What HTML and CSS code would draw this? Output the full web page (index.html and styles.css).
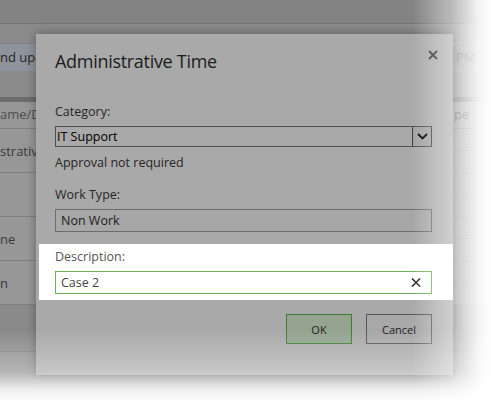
FILE: index.html
```html
<!DOCTYPE html>
<html>
<head>
<meta charset="utf-8">
<link rel="stylesheet" href="styles.css">
</head>
<body>
<div class="app">
  <div class="topbar"></div>
  <div class="toolbar">
    <div class="tb-btn">nd upd</div>
    <div class="tb-time">PM</div>
  </div>
  <div class="band"></div>
  <div class="grid">
    <div class="cell head left">ame/D</div>
    <div class="cell head mid"></div>
    <div class="cell head right">pe</div>

    <div class="cell left tall">strative</div>
    <div class="cell mid tall"></div>
    <div class="cell right split"><div class="sub"></div><div class="sub"></div></div>

    <div class="cell left tall"></div>
    <div class="cell mid tall"></div>
    <div class="cell right split"><div class="sub"></div><div class="sub"></div></div>

    <div class="cell left tall">ne</div>
    <div class="cell mid tall"></div>
    <div class="cell right split"><div class="sub"></div><div class="sub"></div></div>

    <div class="cell left tall">n</div>
    <div class="cell mid tall"></div>
    <div class="cell right split"><div class="sub"></div><div class="sub"></div></div>
  </div>
  <div class="footer"></div>
</div>

<div class="dialog">
  <h1 class="title">Administrative Time</h1>
  <button class="close" aria-label="Close">
    <svg width="10" height="10" viewBox="0 0 10 10"><path d="M1 1L9 9M9 1L1 9" stroke="#2e2e2e" stroke-width="1.8" fill="none"/></svg>
  </button>

  <div class="label first">Category:</div>
  <div class="select">
    <span class="select-text">IT Support</span>
    <span class="select-btn">
      <svg width="11" height="7" viewBox="0 0 11 7"><path d="M1 1L5.5 5.5L10 1" stroke="#000" stroke-width="1.8" fill="none"/></svg>
    </span>
  </div>
  <div class="note">Approval not required</div>

  <div class="label">Work Type:</div>
  <div class="input readonly">Non Work</div>

  <div class="highlight">
    <div class="label hl">Description:</div>
    <div class="input desc">
      <span>Case 2</span>
      <svg width="10" height="9" viewBox="0 0 10 9"><path d="M1 0.5L9 8.5M9 0.5L1 8.5" stroke="#333" stroke-width="1.7" fill="none"/></svg>
    </div>
  </div>

  <div class="actions">
    <button class="btn ok">OK</button>
    <button class="btn cancel">Cancel</button>
  </div>
</div>

<div class="fade"></div>
</body>
</html>
```
FILE: styles.css
```css
html, body {
  margin: 0;
  padding: 0;
}
body {
  width: 491px;
  height: 402px;
  overflow: hidden;
  position: relative;
  background: #8e8e8e;
  font-family: "Open Sans", "Noto Sans", sans-serif;
  font-size: 12.5px;
}
.app {
  display: flex;
  flex-direction: column;
  width: 491px;
}
.topbar {
  height: 23px;
  background: #838383;
  border-bottom: 1px solid #747474;
}
.toolbar {
  height: 73px;
  background: #8b8b8b;
  display: flex;
  justify-content: space-between;
  align-items: flex-start;
  padding-top: 19px;
  box-sizing: border-box;
}
.tb-btn {
  width: 40px;
  height: 28px;
  box-sizing: border-box;
  background: #8f949c;
  border-top: 1px solid #7d8189;
  color: #262626;
  line-height: 27px;
  white-space: nowrap;
  font-size: 13px;
}
.tb-time {
  width: 38px;
  height: 28px;
  box-sizing: border-box;
  border-top: 1px solid #9a9a9a;
  border-bottom: 1px solid #9a9a9a;
  color: #555;
  line-height: 27px;
  padding-left: 3px;
  font-size: 13px;
}
.band {
  height: 5px;
  background: #6c6c6c;
}
.grid {
  display: grid;
  grid-template-columns: 40px 1fr 38px;
  background: #979797;
}
.cell {
  box-sizing: border-box;
  border-bottom: 1px solid #7f7f7f;
  color: #3a3a3a;
  white-space: nowrap;
  font-size: 13px;
}
.head {
  height: 27px;
  line-height: 24px;
  color: #4c4c4c;
}
.tall {
  height: 44px;
  line-height: 44px;
}
.right.head {
  padding-left: 1px;
}
.split {
  border-bottom: none;
  display: flex;
  flex-direction: column;
}
.sub {
  height: 22px;
  box-sizing: border-box;
  border-bottom: 1px solid #8a8a8a;
}
.footer {
  height: 46px;
  background: #8a8a8a;
  border-bottom: 1px solid #7a7a7a;
}

.dialog {
  position: absolute;
  left: 36px;
  top: 34px;
  width: 417px;
  box-sizing: border-box;
  background: #a9a9a9;
  padding: 15px 21px 31px 19px;
  box-shadow: 0 0 10px rgba(0, 0, 0, 0.35);
}
.title {
  margin: 0;
  font-weight: normal;
  font-size: 18px;
  line-height: 24px;
  color: #1c1c1c;
  letter-spacing: -0.3px;
}
.close {
  position: absolute;
  top: 16px;
  right: 15px;
  width: 10px;
  height: 10px;
  padding: 0;
  border: none;
  background: none;
  display: flex;
}
.label {
  line-height: 18px;
  color: #262626;
  margin-top: 14px;
}
.label.first {
  margin-top: 30px;
}
.select {
  margin-top: 5px;
  height: 21px;
  box-sizing: border-box;
  border: 1px solid #505050;
  display: flex;
  justify-content: space-between;
  align-items: stretch;
}
.select-text {
  color: #000;
  line-height: 19px;
  padding-left: 1px;
}
.select-btn {
  width: 20px;
  box-sizing: border-box;
  border-left: 1px solid #3e3e3e;
  border-right: 1px solid #3e3e3e;
  background: #a2a2a2;
  display: flex;
  align-items: center;
  justify-content: center;
  margin-right: -1px;
}
.note {
  margin-top: 7px;
  line-height: 18px;
  color: #262626;
}
.input {
  margin-top: 5px;
  height: 23px;
  box-sizing: border-box;
  line-height: 21px;
  padding-left: 5px;
}
.readonly {
  border: 1px solid #6c6c6c;
  background: #a7a7a7;
  color: #1c1c1c;
}
.highlight {
  margin: 12px -21px 0 -16px;
  padding: 4px 21px 6px 16px;
  background: #fff;
}
.label.hl {
  margin-top: 0;
  color: #555;
}
.desc {
  border: 1px solid #74ad58;
  color: #444;
  display: flex;
  justify-content: space-between;
  align-items: center;
  padding-right: 10px;
}
.actions {
  margin-top: 14px;
  display: flex;
  justify-content: flex-end;
  gap: 14px;
}
.btn {
  width: 66px;
  height: 30px;
  box-sizing: border-box;
  font-family: inherit;
  font-size: 11px;
  color: #1c1c1c;
  padding: 0;
}
.ok {
  background: #94a490;
  border: 1px solid #3f7c33;
}
.cancel {
  background: #a8a8a8;
  border: 1px solid #575757;
}
.fade {
  position: absolute;
  inset: 0;
  pointer-events: none;
  background:
    linear-gradient(to right, rgba(255,255,255,0) 412px, rgba(255,255,255,0.45) 452px, rgba(255,255,255,0.9) 478px, #fff 491px),
    linear-gradient(to bottom, rgba(255,255,255,0) 330px, rgba(255,255,255,0.35) 372px, rgba(255,255,255,0.85) 390px, #fff 402px);
}
```
